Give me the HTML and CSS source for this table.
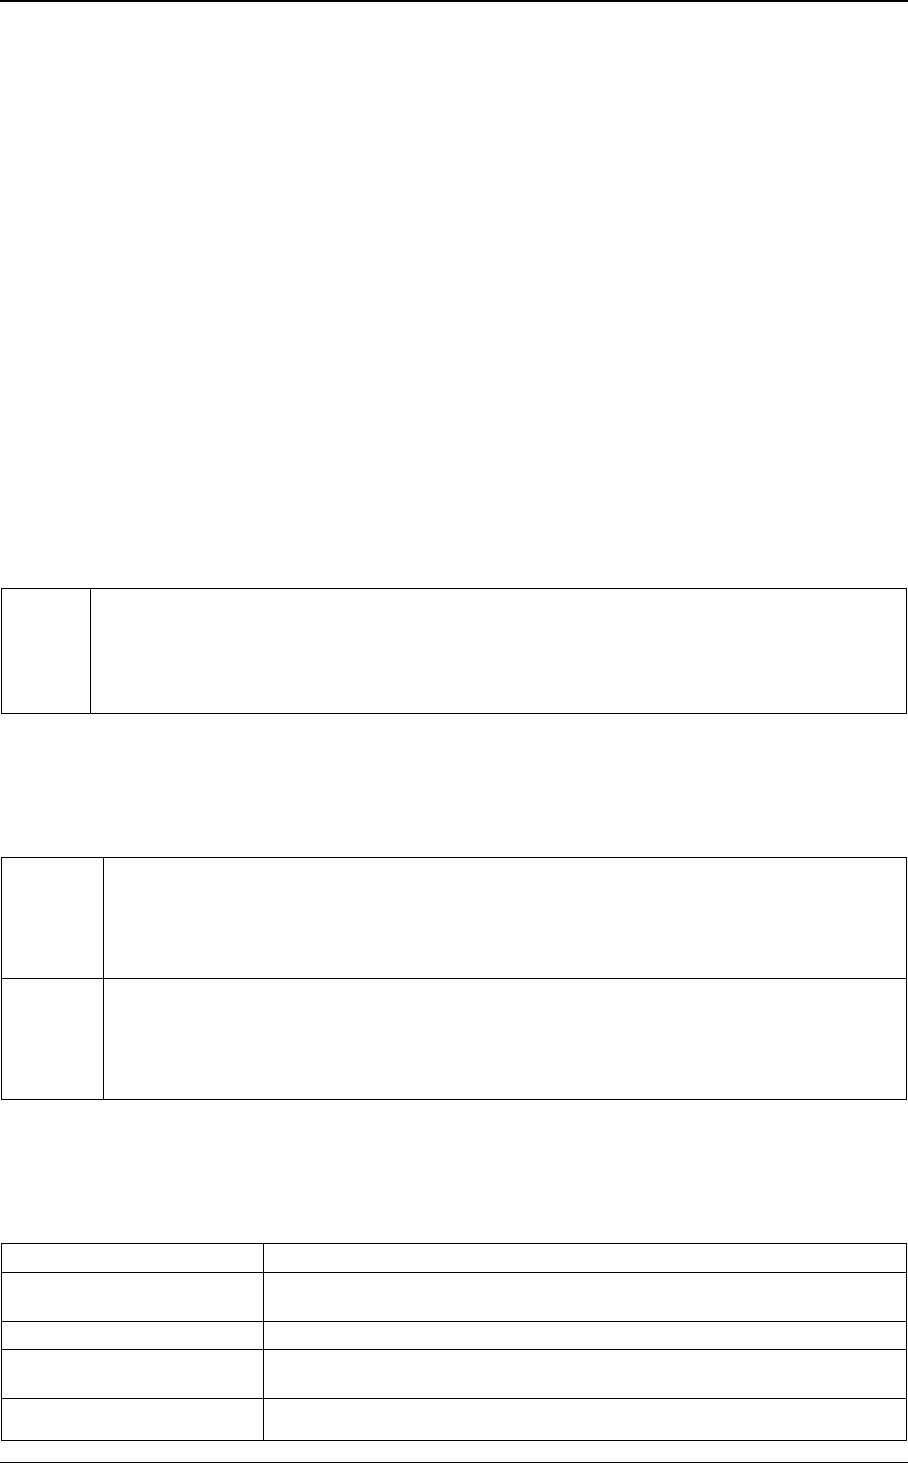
FILE: index.html
```html
<!DOCTYPE html>
<html lang="en">
<head>
<meta charset="utf-8">
<title>Document</title>
<link rel="stylesheet" href="styles.css">
</head>
<body>
<div class="page">
  <div class="rule rule-top"></div>

  <div class="tbl tbl-one">
    <div class="cell key"></div>
    <div class="cell val"></div>
  </div>

  <div class="tbl tbl-two">
    <div class="cell key row-a"></div>
    <div class="cell val row-a"></div>
    <div class="cell key row-b last"></div>
    <div class="cell val row-b last"></div>
  </div>

  <div class="tbl tbl-three">
    <div class="cell key r1"></div>
    <div class="cell val r1"></div>
    <div class="cell key r2"></div>
    <div class="cell val r2"></div>
    <div class="cell key r3"></div>
    <div class="cell val r3"></div>
    <div class="cell key r4"></div>
    <div class="cell val r4"></div>
    <div class="cell key r5 last"></div>
    <div class="cell val r5 last"></div>
  </div>

  <div class="rule rule-bottom"></div>
</div>
</body>
</html>
```

FILE: styles.css
```css
* { box-sizing: border-box; }

html, body {
  margin: 0;
  padding: 0;
  background: #ffffff;
  font-family: "Liberation Serif", "Times New Roman", serif;
  color: #000;
}

.page {
  width: 908px;
  display: flex;
  flex-direction: column;
}

.rule {
  width: 908px;
  height: 2px;
  background: #000;
}

.rule-bottom {
  margin-top: 21px;
}

.tbl {
  display: grid;
  width: 906px;
  margin-left: 1px;
  border: 1px solid #000;
}

.cell {
  border-bottom: 1px solid #000;
}

.cell.last {
  border-bottom: none;
}

.cell.key {
  border-right: 1px solid #000;
}

/* table one */
.tbl-one {
  margin-top: 586px;
  grid-template-columns: 89px 1fr;
  grid-template-rows: 124px;
}
.tbl-one .cell { border-bottom: none; }

/* table two */
.tbl-two {
  margin-top: 143px;
  grid-template-columns: 102px 1fr;
  grid-template-rows: 121px 120px;
}

/* table three */
.tbl-three {
  margin-top: 143px;
  grid-template-columns: 262px 1fr;
  grid-template-rows: 29px 49px 28px 49px 41px;
}
```
